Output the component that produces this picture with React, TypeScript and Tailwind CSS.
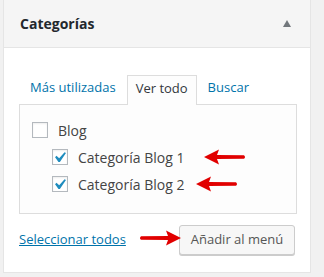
import type { ReactNode } from 'react'

function Check({ checked }: { checked?: boolean }) {
  return (
    <span className="relative block h-4 w-4 shrink-0 border border-[#b4b9be] bg-white shadow-[inset_0_1px_2px_rgba(0,0,0,0.07)]">
      {checked && (
        <svg
          className="absolute left-[-4px] top-[-3px]"
          width="21"
          height="21"
          viewBox="0 0 20 20"
        >
          <path
            fill="#1e8cbe"
            d="M14.83 4.89l1.34.94-5.81 8.38H9.02L5.78 9.67l1.34-1.25 2.57 2.4z"
          />
        </svg>
      )}
    </span>
  )
}

function Row({ checked, indent, children }: { checked?: boolean; indent?: boolean; children: ReactNode }) {
  return (
    <label className={`flex h-[27px] items-center gap-[10px] ${indent ? 'pl-[20px]' : ''}`}>
      <Check checked={checked} />
      <span className="text-[14px] text-[#444]">{children}</span>
    </label>
  )
}

function Arrow({ dir, className }: { dir: 'left' | 'right'; className: string }) {
  return (
    <svg className={`absolute ${className}`} width="42" height="16" viewBox="0 0 42 16">
      <g transform={dir === 'right' ? 'translate(42 0) scale(-1 1)' : undefined}>
        <path d="M0 8 L15 0.5 L13 6 L40 6.2 Q42 8 40 9.8 L13 10 L15 15.5 Z" fill="#e10000" />
      </g>
    </svg>
  )
}

export default function App() {
  return (
    <div className="h-[277px] w-[324px] overflow-hidden bg-[#f1f1f1] font-['Open_Sans',sans-serif]">
      <div className="relative ml-[3px] h-[273px] w-[308px] border-x border-b border-[#e5e5e5] bg-white">
        <div className="flex h-[48px] items-center justify-between border-b border-[#e5e5e5] bg-[#f5f5f5] pl-[16px] pr-[19px]">
          <h3 className="text-[14px] font-bold text-[#23282d]">Categorías</h3>
          <span className="h-0 w-0 border-x-[4px] border-b-[7px] border-x-transparent border-b-[#72777c]" />
        </div>

        <div className="px-[15px] pt-[26px]">
          <ul className="flex items-end gap-[5px] pl-[5px] text-[13px]">
            <li className="border border-transparent px-[5px] pb-[5px] pt-[3px] text-[#0073aa]">Más utilizadas</li>
            <li className="relative z-10 -mb-px border border-b-0 border-[#ddd] bg-[#fdfdfd] px-[8px] pb-[6px] pt-[3px] text-[#32373c]">
              Ver todo
            </li>
            <li className="border border-transparent px-[5px] pb-[5px] pt-[3px] text-[#0073aa]">Buscar</li>
          </ul>

          <div className="h-[110px] w-[278px] border border-[#ddd] bg-[#fdfdfd] pl-[12px] pt-[12px]">
            <Row>Blog</Row>
            <Row checked indent>Categoría Blog 1</Row>
            <Row checked indent>Categoría Blog 2</Row>
          </div>

          <div className="mt-[11px] flex h-[30px] items-center justify-between">
            <a href="#" className="text-[13px] text-[#0073aa] underline">Seleccionar todos</a>
            <button className="h-[30px] w-[116px] rounded-[3px] border border-[#ccc] bg-[#f7f7f7] text-[13px] text-[#555] shadow-[0_1px_0_#ccc]">
              Añadir al menú
            </button>
          </div>
        </div>

        <Arrow dir="left" className="left-[200px] top-[149px]" />
        <Arrow dir="left" className="left-[192px] top-[176px]" />
        <Arrow dir="right" className="left-[135px] top-[230px]" />
      </div>
    </div>
  )
}
